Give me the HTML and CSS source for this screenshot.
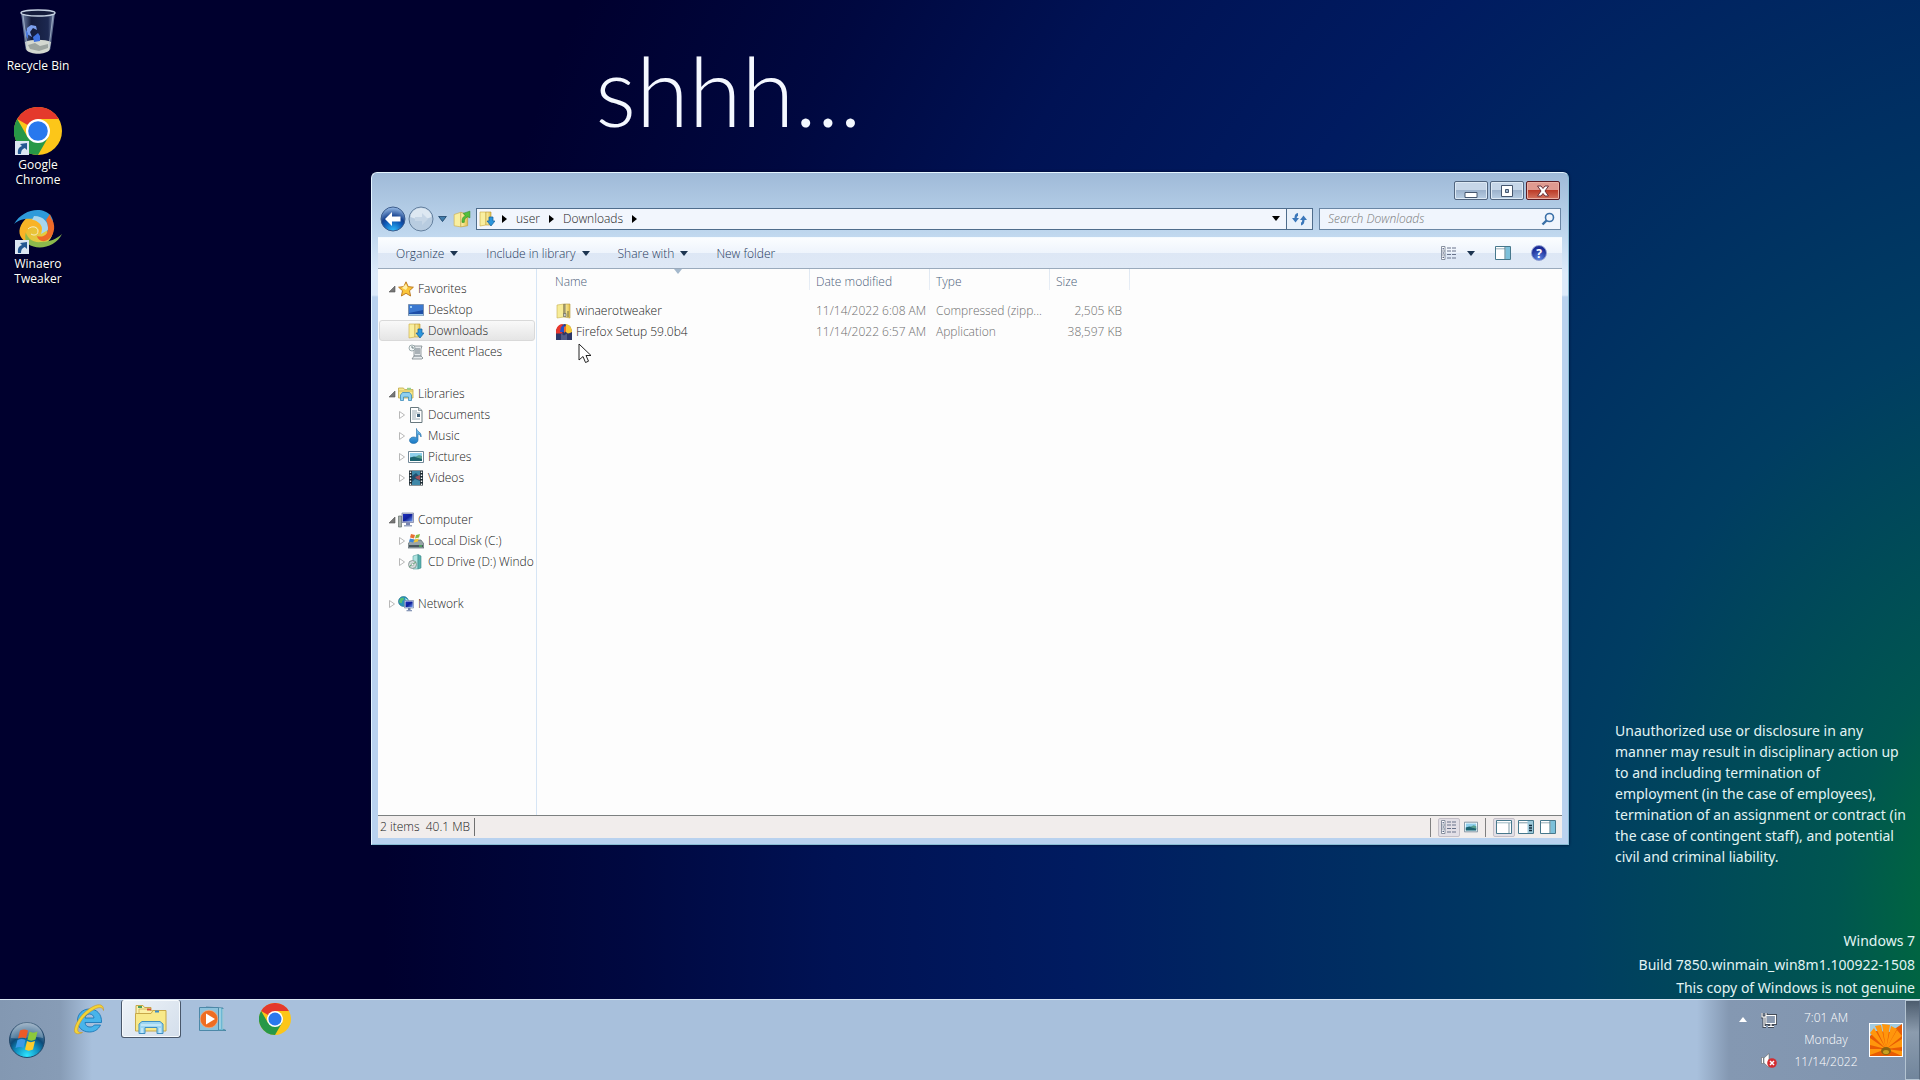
FILE: index.html
```
<!DOCTYPE html>
<html lang="en">
<head>
    <meta charset="UTF-8">
    <meta name="viewport" content="width=device-width, initial-scale=1.0">
    <title>Downloads</title>
    <link rel="stylesheet" href="styles.css">
</head>
<body>
    <!-- shared icons -->
    <svg class="sprite" aria-hidden="true">
        <defs>
            <linearGradient id="gFolder" x1="0" y1="0" x2="1" y2="0">
                <stop offset="0" stop-color="#fdf5b0"/><stop offset="1" stop-color="#e3c04c"/>
            </linearGradient>
            <linearGradient id="gBlue" x1="0" y1="0" x2="0" y2="1">
                <stop offset="0" stop-color="#7fc8f2"/><stop offset="1" stop-color="#1878c4"/>
            </linearGradient>
            <linearGradient id="gScreen" x1="0" y1="0" x2="1" y2="1">
                <stop offset="0" stop-color="#1c2ec0"/><stop offset=".5" stop-color="#10209a"/><stop offset="1" stop-color="#6f9cf0"/>
            </linearGradient>
            <linearGradient id="gGlass" x1="0" y1="0" x2="1" y2="0">
                <stop offset="0" stop-color="#8fa6c8" stop-opacity=".8"/><stop offset=".3" stop-color="#141c3c"/><stop offset=".8" stop-color="#1c2850"/><stop offset="1" stop-color="#9fb2d0" stop-opacity=".8"/>
            </linearGradient>
            <radialGradient id="gOrb" cx=".5" cy=".95" r=".95">
                <stop offset="0" stop-color="#2ee6ff"/><stop offset=".4" stop-color="#0d86b8"/><stop offset=".6" stop-color="#0c4a78"/><stop offset="1" stop-color="#8aa2ba"/>
            </radialGradient>
            <radialGradient id="gBack" cx=".5" cy="1" r="1">
                <stop offset="0" stop-color="#30c0ff"/><stop offset=".45" stop-color="#0d56b4"/><stop offset=".6" stop-color="#14408e"/><stop offset="1" stop-color="#9cc0ea"/>
            </radialGradient>
            <linearGradient id="gSwirl" x1="0" y1="0" x2="1" y2="1">
                <stop offset="0" stop-color="#f8b020"/><stop offset="1" stop-color="#d8d850"/>
            </linearGradient>
        </defs>
        <symbol id="i-down" viewBox="0 0 16 16">
            <path d="M1 1h6v13l-6 1z" fill="#f9efa0" stroke="#c9a83c" stroke-width=".6"/>
            <path d="M7 1h5v13H7z" fill="url(#gFolder)" stroke="#b8962e" stroke-width=".6"/>
            <path d="M10 6h4v4h2l-4 5-4-5h2z" fill="#2b95dc" stroke="#14609c" stroke-width=".7"/>
        </symbol>
        <symbol id="i-up" viewBox="0 0 16 16">
            <path d="M1 4l6-2v13l-6-1z" fill="#f9efa0" stroke="#d0b050" stroke-width=".6"/>
            <path d="M7 2l6 2v10l-6 1z" fill="url(#gFolder)" stroke="#c0a040" stroke-width=".6"/>
            <path d="M8 11c0-4 1-5 3-6L9 3l6-2v6l-2-1c-2 1-3 2-3 5z" fill="#52bf3c" stroke="#2e8a20" stroke-width=".5"/>
        </symbol>
        <symbol id="i-star" viewBox="0 0 16 16">
            <path d="M8 .8l2.200 4.800 5.200.6-3.900 3.500 1.100 5.300L8 12.300 3.400 15l1.100-5.300L.6 6.200l5.200-.6z" fill="#fbc63a" stroke="#b8741c" stroke-width=".9"/>
            <path d="M8 3l1.500 3.500L8 9 4 7z" fill="#fff0a8"/>
        </symbol>
        <symbol id="i-desktop" viewBox="0 0 16 16">
            <path d="M.5 2.500h15v11H.5z" fill="#1d4fa8" stroke="#7890b0"/>
            <path d="M1 3h14v5L1 11z" fill="#3a78d0"/>
            <path d="M1 12h14v1.500H1z" fill="#9cc8e8"/>
            <path d="M2 4h2v2H2z" fill="#9cd0f8"/>
        </symbol>
        <symbol id="i-recent" viewBox="0 0 16 16">
            <path d="M5 2h9l-1 3v7l2 2-1 1H4l2-3V4z" fill="#e6eaec" stroke="#7c868c" stroke-width=".8"/>
            <path d="M7 5h5M7 7h5M7 9h5M6 12h7" stroke="#6c7880" stroke-width="1"/>
            <circle cx="4" cy="4" r="3" fill="#f4f8f8" stroke="#88989c" stroke-width=".8"/>
            <path d="M4 2v2h2" stroke="#506468" stroke-width=".8" fill="none"/>
        </symbol>
        <symbol id="i-lib" viewBox="0 0 16 16">
            <path d="M.5 2h5l1 1.500h8.500V12H.5z" fill="#f6e88c" stroke="#c0a848" stroke-width=".8"/>
            <path d="M1 5h14" stroke="#d8bc58"/><path d="M9 1.800h4v2H9z" fill="#9ad08c"/>
            <path d="M2.500 14.500V9l2-2.500h7l2 2.500v5.500h-3V11h-5v3.500z" fill="#8ed0f0" stroke="#3c8cba" stroke-width=".8"/>
        </symbol>
        <symbol id="i-doc" viewBox="0 0 16 16">
            <path d="M2.500.5h8l3.500 3v12H2.500z" fill="#fff" stroke="#68787e"/>
            <path d="M4 4h5M4 6h8M4 8h4M4 10h4M4 12h8" stroke="#98a8b2"/>
            <path d="M9 7h3v3H9z" fill="#3e5f78"/>
            <path d="M10.500.5v3H14" fill="#c8d4da" stroke="#68787e" stroke-width=".7"/>
        </symbol>
        <symbol id="i-music" viewBox="0 0 16 16">
            <path d="M8.500.5c0 3 5.500 3.500 4.500 8.500-.5-2-1.800-3-3-3v6c0 2-1.900 3.500-4.500 3.500S1.500 14 1.500 12.200 3.500 9 5.500 9c1.300 0 2.200.3 3 .8z" fill="url(#gBlue)" stroke="#1b68a4" stroke-width=".6"/>
        </symbol>
        <symbol id="i-pic" viewBox="0 0 16 16">
            <path d="M.5 2.500h15v11H.5z" fill="#fff" stroke="#728898"/>
            <path d="M2 4h12v8H2z" fill="#8fd0ec"/><path d="M2 8.500l4-1 8 1.500v3H2z" fill="#1c6470"/><path d="M7 8l4-2 3 1v3z" fill="#58a090"/>
        </symbol>
        <symbol id="i-video" viewBox="0 0 16 16">
            <path d="M1 .5h14v15H1z" fill="#1c2a32"/>
            <path d="M4 1h8v14H4z" fill="#3f88a8"/><path d="M4 6l4-3 4 4v4l-5-2-3 3z" fill="#205070"/><path d="M7 7l5-2v5l-3-1z" fill="#a05058"/>
            <path d="M2.500 1.500v14M13.500 1.500v14" stroke="#f0f4f4" stroke-width="1.400" stroke-dasharray="1.500 1.500"/>
        </symbol>
        <symbol id="i-pc" viewBox="0 0 16 16">
            <path d="M.5 4h3v11h-3z" fill="#a8b0ac" stroke="#64706c" stroke-width=".7"/>
            <path d="M4 1h11.500v9.500H4z" fill="#c8ccd8" stroke="#7078a0" stroke-width=".7"/>
            <path d="M5 2h9.500v7.500H5z" fill="url(#gScreen)"/><path d="M8 10.500h4V13H8z" fill="#7884b0"/><path d="M6 13h8v1.500H6z" fill="#98a4c0"/>
        </symbol>
        <symbol id="i-disk" viewBox="0 0 16 16">
            <path d="M3 7h10l3 4v4H0v-4z" fill="#98a4a8" stroke="#58646a" stroke-width=".7"/>
            <path d="M1 12h14v2H1z" fill="#48565c"/><path d="M11 12.500h3v1h-3z" fill="#52e060"/>
            <path d="M3 1l4 1-1 3.500-4-1z" fill="#e87034"/><path d="M8 2l4-1-1 3.500-4 1z" fill="#86b840"/><path d="M2 5.500l4 1-1 3-4-1z" fill="#3c88d8"/><path d="M6.800 6.500l4-1-1 3-4 1z" fill="#f4c430"/>
        </symbol>
        <symbol id="i-cd" viewBox="0 0 16 16">
            <path d="M5 2l5-1.500V15H5z" fill="#aee4e0" stroke="#58a0a0" stroke-width=".6"/><path d="M10 .5L13 2v12l-3 1z" fill="#58b0ae" stroke="#3c8a8a" stroke-width=".6"/>
            <circle cx="4.500" cy="10.500" r="4" fill="#d4dcdc" stroke="#788888" stroke-width=".8"/><circle cx="4.500" cy="10.500" r="1.200" fill="#fff" stroke="#788888" stroke-width=".6"/>
            <path d="M1.500 12.500l2-1.500M5.500 10l2-2" stroke="#48a060"/>
        </symbol>
        <symbol id="i-net" viewBox="0 0 16 16">
            <circle cx="5.500" cy="5.500" r="5" fill="#2a94b8" stroke="#186888" stroke-width=".6"/>
            <path d="M2 3c2-2 4-1 4 0s-2 1-2 3-2 1-3 0z" fill="#58c070"/><path d="M7 2l3 2v2L8 5z" fill="#c0ecf0"/>
            <path d="M6.500 4.500h9v7.500h-9z" fill="#dce4f0" stroke="#6878a0" stroke-width=".6"/>
            <path d="M7.500 5.500h7.200v5.700H7.500z" fill="url(#gScreen)"/><path d="M10 12h2.500v2H10z" fill="#7080a8"/><path d="M8.500 14h5.500v1.300H8.500z" fill="#8898b8"/>
        </symbol>
        <symbol id="i-zip" viewBox="0 0 16 16">
            <path d="M1 2l7-1v13l-7 1z" fill="#f7ec98" stroke="#c8b050" stroke-width=".6"/><path d="M8 1h6v14l-6-1z" fill="url(#gFolder)" stroke="#b49840" stroke-width=".6"/>
            <path d="M8.500 1.500v9" stroke="#585850" stroke-width="2.400" stroke-dasharray="1 1"/>
            <path d="M7.500 10.500h2.500v3H7.500z" fill="#c8ccc8" stroke="#606058" stroke-width=".6"/><path d="M12 8v6" stroke="#707048"/>
        </symbol>
        <symbol id="i-ffsetup" viewBox="0 0 16 16">
            <path d="M0 6l4-5 5-1 5 2 2 5v9H0z" fill="#2a3566"/>
            <path d="M0 8C0 3 3 0 7 0L5 6l2 4H0z" fill="#e8362c"/><path d="M10 0c3 .5 6 3 6 8l-4 2-3-3z" fill="#f6c838"/>
            <path d="M5 3l3-2 2 3-2 4-4 0z" fill="#2450c8"/><path d="M8 3l2-1v5L8 9z" fill="#f06a28"/>
            <path d="M0 9.500h16V16H0z" fill="#2e3868"/><path d="M5 9.500l3 2 3-2V16H5z" fill="#525c88"/>
        </symbol>
        <symbol id="i-views" viewBox="0 0 16 14">
            <path d="M.5.5h3.500v13H.5zM.5 5h3.500M.5 9h3.500" fill="#fff" stroke="#7c8696" stroke-width=".9"/>
            <path d="M1.500 2.800h1.500M1.500 7h1.500M1.500 11.300h1.500" stroke="#30406a"/>
            <path d="M6 2h10M6 5h10M6 8.500h10M6 12h10" stroke="#68728a" stroke-dasharray="4 1"/>
        </symbol>
        <symbol id="i-pane" viewBox="0 0 16 14">
            <path d="M.5.5h15v13H.5z" fill="#fff" stroke="#47788c"/><path d="M1 2.800h9" stroke="#7c98a4" stroke-width=".8"/>
            <path d="M10.500 1H15v12h-4.500z" fill="#7cc0da"/><path d="M10 1v12" stroke="#47788c"/>
        </symbol>
        <symbol id="i-pane-empty" viewBox="0 0 16 14">
            <path d="M.5.5h15v13H.5z" fill="#fff" stroke="#47788c"/><path d="M1 2.800h14" stroke="#9cb8c2"/><path d="M13 3v10" stroke="#7c98a4"/>
        </symbol>
        <symbol id="i-pane-list" viewBox="0 0 16 14">
            <path d="M.5.5h15v13H.5z" fill="#fff" stroke="#47788c"/><path d="M1 2.800h9" stroke="#7c98a4"/>
            <path d="M9.500 1H15v12H9.500z" fill="#9cc8da"/><path d="M11 5.500h3M11 8h3M11 10.500h3" stroke="#102838" stroke-width="1.500"/>
        </symbol>
        <symbol id="i-caret" viewBox="0 0 8 5"><path d="M0 0h8L4 5z"/></symbol>
        <symbol id="i-arrow" viewBox="0 0 5 8"><path d="M0 0l5 4-5 4z"/></symbol>
        <symbol id="i-open" viewBox="0 0 8 8"><path d="M7 1v6H1z" fill="#777" stroke="#555" stroke-width=".6"/></symbol>
        <symbol id="i-closed" viewBox="0 0 8 8"><path d="M1.500.5l5 3.500-5 3.500z" fill="#fff" stroke="#b0b0b0" stroke-width=".9"/></symbol>
        <symbol id="i-chrome" viewBox="0 0 48 48">
            <circle cx="24" cy="24" r="24" fill="#fcc619"/>
            <path d="M24 24L3.200 12A24 24 0 0 1 44.800 12H24z" fill="#e4392c"/>
            <path d="M3.200 12A24 24 0 0 0 24 48L34.400 30 24 24 13.600 30z" fill="#279847"/>
            <circle cx="24" cy="24" r="12" fill="#fff"/><circle cx="24" cy="24" r="9.800" fill="#2878ee"/>
        </symbol>
        <symbol id="i-shortcut" viewBox="0 0 14 14">
            <path d="M0 0h14v14H0z" fill="#dce6f2"/>
            <path d="M3 13C2.500 8 4 6 7 5L5 3l7-1v7L9.800 7C7 8 6 10 6 13z" fill="#245892"/>
        </symbol>
        <symbol id="i-bin" viewBox="0 0 36 46">
            <path d="M1 3l4.500 37c4 5 21 5 25 0L35 3z" fill="url(#gGlass)"/>
            <ellipse cx="18" cy="4" rx="17" ry="3" fill="#141c3c" stroke="#c8d4e4" stroke-width="1.400"/>
            <path d="M5 33c6-3 20-3 26 0l-1.500 8c-4 5-19 5-23 0z" fill="#d4d8d0"/><path d="M8 36l7-2 5 3 8-2v4l-9 3-9-2z" fill="#9ca4a0"/>
            <path d="M7 19l4-3 5 1 1 4-4-2-3 4 2 5-5-3z" fill="#7ca0ee"/><path d="M13 28l5-4 2 3 0 5-6 1z" fill="#3f72e0"/><path d="M5 20l3 4v6l-2-3z" fill="#4a78dc"/>
            <path d="M3 6l4 32M33 6l-4 32" stroke="#b8c6d8" stroke-opacity=".7" fill="none"/>
        </symbol>
        <symbol id="i-winaero" viewBox="0 0 48 40">
            <circle cx="23" cy="20" r="16" fill="url(#gSwirl)"/>
            <path d="M0 14C8 0 28-5 37 6c4 6 2 14-4 16 2-8-4-13-12-13C12 8 5 9 0 14z" fill="#2e9ada"/>
            <path d="M20 6c10 0 15 7 14 14l-7 4c3-8-1-12-9-14z" fill="#a8d6ee"/>
            <path d="M36 4l1 4c5 6 4 16-2 21-5 4-11 2-12-3 6 2 11-1 11-8 0-5-2-8-2-8z" fill="#ee6a28"/>
            <path d="M48 24C42 37 24 41 14 34c-5-4-6-10-3-15 1 9 8 14 16 13 8 0 16-3 21-8z" fill="#8cba4c"/>
            <path d="M9 12c-6 8-4 16 3 20-2-8 0-15 8-16 6 0 6 6 2 7 4 1 7-3 5-7-3-7-13-8-18-4z" fill="#f9b326"/>
            <path d="M14 19c4-4 10-2 10 2s-4 5-7 3" fill="none" stroke="#fff" stroke-opacity=".7"/>
        </symbol>
        <symbol id="i-ie" viewBox="0 0 32 32">
            <path d="M27.500 22C25 27 21 29 16.500 29 9 29 4.500 24 4.500 17.500S9.500 6 16.500 6c7 0 12.500 5 12 13.500H12c.3 3 2 4.500 5 4.500 2.200 0 3.500-.8 4.300-2zM12 15h9c-.3-2.500-2-4-4.500-4S12.500 12.500 12 15z" fill="#48b4ea" stroke="#1c78b8" stroke-width=".9" fill-rule="evenodd"/>
            <path d="M30.500 7.500C31 2 27 0 20 3.500 11 8 3 18 1.500 26c-.8 5 3 6 8 3.500-4 .5-5.500-1-4.500-4.500C7 17 14 10 22 6c4-2 7.500-2.200 8.500 1.500z" fill="#f4d436" stroke="#c8962a" stroke-width=".6"/>
        </symbol>
        <symbol id="i-explorer" viewBox="0 0 34 30">
            <path d="M2 1.500h7l1.500 2H17V26H2z" fill="#fbf2ae" stroke="#c8a848"/>
            <path d="M9 5h6l2 1.500h6V26H5V5z" fill="#fbf0a4" stroke="#ceae50" stroke-width=".8"/>
            <path d="M1.500 9.500H17l2-3h13V27h-30.500z" fill="#f8e98a" stroke="#c8a848"/>
            <path d="M4 2h4v2H4z" fill="#4ca060"/><path d="M13 4.500h4v2h-4z" fill="#d85038"/><path d="M21 6.500h4v2h-4z" fill="#3c8cc8"/>
            <path d="M5 29.500V20l3-2.500h18l3 2.500v9.500h-6v-6H11v6z" fill="#9cd6f2" stroke="#3f8fc2"/>
            <path d="M7 21h20M8 24v5M26 24v5" stroke="#e4f6ff"/>
        </symbol>
        <symbol id="i-media" viewBox="0 0 30 26">
            <path d="M8 1l17 1v21l3 1.500H9z" fill="#6cb8d4" stroke="#40809c" stroke-width=".8"/>
            <path d="M22 2v21M25 3v20" stroke="#e0f2f8" stroke-width=".8"/>
            <path d="M1.500 1.500h19v23h-19z" fill="#8cc2dc" stroke="#4c88a8"/>
            <circle cx="11" cy="13" r="8.800" fill="#ee6d22" stroke="#f8b488" stroke-width=".6"/><path d="M8 7.500v11l9-5.500z" fill="#fff"/>
        </symbol>
        <symbol id="i-start" viewBox="0 0 38 38">
            <circle cx="19" cy="19" r="17.500" fill="url(#gOrb)" stroke="#24486a"/>
            <path d="M3 17a16 16 0 0 1 32 0c-10-3-22 2-32 0z" fill="#fff" fill-opacity=".25"/>
            <path d="M12 9.500c3-1.500 5.500-1.500 8 0l-2 8c-2.500-1.500-5-1.500-8 0z" fill="#ee5a26"/>
            <path d="M21.500 10.500c2.500 1.500 5 1.500 8 0l-2 8c-3 1.500-5.500 1.500-8 0z" fill="#8cc83c"/>
            <path d="M9.500 19c3-1.500 5.500-1.500 8 0l-2 8c-2.500-1.500-5-1.500-8 0z" fill="#3c9ae8"/>
            <path d="M19 20c2.500 1.500 5 1.500 8 0l-2 8.500c-3 1.500-5.500 1.500-8 0z" fill="#fccc2c"/>
        </symbol>
    </svg>

    <main class="desktop">
        <div class="shortcuts">
            <a class="shortcut" href="#">
                <span class="shortcut-icon"><svg width="36" height="46"><use href="#i-bin"/></svg></span>
                Recycle Bin
            </a>
            <a class="shortcut" href="#">
                <span class="shortcut-icon"><svg width="48" height="48"><use href="#i-chrome"/></svg><svg class="overlay" width="14" height="14"><use href="#i-shortcut"/></svg></span>
                Google Chrome
            </a>
            <a class="shortcut" href="#">
                <span class="shortcut-icon"><svg width="48" height="40"><use href="#i-winaero"/></svg><svg class="overlay" width="14" height="14"><use href="#i-shortcut"/></svg></span>
                Winaero Tweaker
            </a>
        </div>

        <h1 class="shhh">shhh...</h1>

        <div class="watermark">
            <p class="legal">
                Unauthorized use or disclosure in any<br>
                manner may result in disciplinary action up<br>
                to and including termination of<br>
                employment (in the case of employees),<br>
                termination of an assignment or contract (in<br>
                the case of contingent staff), and potential<br>
                civil and criminal liability.
            </p>
            <p class="build">Windows 7</p>
            <p class="build">Build 7850.winmain_win8m1.100922-1508</p>
            <p class="build genuine">This copy of Windows is not genuine</p>
        </div>

        <section class="window" aria-label="Downloads">
            <div class="titlebar">
                <button class="winbtn" aria-label="Minimize"><svg width="14" height="14"><path d="M1 8.500h12v5H1z" fill="#fff" stroke="#45566e"/></svg></button>
                <button class="winbtn" aria-label="Maximize"><svg width="14" height="14"><path d="M1.500 1.500h11v11h-11zM5.500 5.500h3v3h-3z" fill="#fff" fill-rule="evenodd" stroke="#45566e"/></svg></button>
                <button class="winbtn close" aria-label="Close"><svg width="14" height="14"><path d="M1.500 2h3.500l2 2.500L9 2h3.500L9 7l3.500 5H9L7 9.500 5 12H1.500L5 7z" fill="#fff" stroke="#6a3038"/></svg></button>
            </div>

            <div class="navrow">
                <button class="round" aria-label="Back"><svg width="26" height="26"><circle cx="13" cy="13" r="12" fill="url(#gBack)" stroke="#3c5c8c"/><path d="M5 13l7-7v4.500h8.500v5H12V20z" fill="#fff"/></svg></button>
                <button class="round" aria-label="Forward"><svg width="26" height="26"><circle cx="13" cy="13" r="12" fill="#b8cce0" stroke="#64809e"/><path d="M2.500 11a10.500 9 0 0 1 21 0c-7 3-14 3-21 0z" fill="#dde8f2"/><path d="M20 13l-6-6v4H7v4h7v4z" fill="#c6d6e6"/></svg></button>
                <button class="recent" aria-label="Recent pages"><svg width="9" height="6" viewBox="0 0 10 7"><path d="M.5.5h9L5 6.500z" fill="#3f7cac" stroke="#1d4468"/></svg></button>
                <button class="up" aria-label="Up"><svg width="18" height="18"><use href="#i-up"/></svg></button>
                <nav class="address" aria-label="Address">
                    <svg width="16" height="16"><use href="#i-down"/></svg>
                    <svg class="sep" width="5" height="8"><use href="#i-arrow"/></svg>
                    <a href="#">user</a>
                    <svg class="sep" width="5" height="8"><use href="#i-arrow"/></svg>
                    <a href="#">Downloads</a>
                    <svg class="sep" width="5" height="8"><use href="#i-arrow"/></svg>
                    <button class="history" aria-label="Previous locations"><svg width="8" height="5"><use href="#i-caret"/></svg></button>
                </nav>
                <button class="refresh" aria-label="Refresh"><svg width="15" height="14"><path d="M0 6h2.500c0-3 1-4.500 3.500-5v3c-1 .3-1.200 1-1.200 2H7l-3.500 4.500zM15 8h-2.500c0 3-1 5-3.500 5.500v-3c1-.3 1.200-1 1.200-2.500H8l3.500-4.500z" fill="#3c78ba"/></svg></button>
                <form class="search">
                    <input type="search" placeholder="Search Downloads" aria-label="Search Downloads">
                    <button type="button" aria-label="Search"><svg width="14" height="14"><circle cx="8.500" cy="5.500" r="4" fill="none" stroke="#3a70a8" stroke-width="1.600"/><path d="M5.500 8.500L1.500 12.500" stroke="#3a70a8" stroke-width="2.400"/></svg></button>
                </form>
            </div>

            <div class="toolbar">
                <button>Organize <svg width="8" height="5"><use href="#i-caret"/></svg></button>
                <button>Include in library <svg width="8" height="5"><use href="#i-caret"/></svg></button>
                <button>Share with <svg width="8" height="5"><use href="#i-caret"/></svg></button>
                <button>New folder</button>
                <div class="tools">
                    <button aria-label="Change view"><svg width="16" height="14"><use href="#i-views"/></svg></button>
                    <button aria-label="More views"><svg width="8" height="5"><use href="#i-caret"/></svg></button>
                    <button aria-label="Preview pane"><svg width="16" height="14"><use href="#i-pane"/></svg></button>
                    <button class="help" aria-label="Help">?</button>
                </div>
            </div>

            <div class="content">
                <nav class="tree" aria-label="Folders">
                    <ul>
                        <li><a href="#"><svg class="tw" width="8" height="8"><use href="#i-open"/></svg><svg width="16" height="16"><use href="#i-star"/></svg>Favorites</a></li>
                        <li><a class="sub" href="#"><svg width="16" height="16"><use href="#i-desktop"/></svg>Desktop</a></li>
                        <li><a class="sub selected" href="#"><svg width="16" height="16"><use href="#i-down"/></svg>Downloads</a></li>
                        <li><a class="sub" href="#"><svg width="16" height="16"><use href="#i-recent"/></svg>Recent Places</a></li>
                    </ul>
                    <ul>
                        <li><a href="#"><svg class="tw" width="8" height="8"><use href="#i-open"/></svg><svg width="16" height="16"><use href="#i-lib"/></svg>Libraries</a></li>
                        <li><a class="node" href="#"><svg class="tw" width="8" height="8"><use href="#i-closed"/></svg><svg width="16" height="16"><use href="#i-doc"/></svg>Documents</a></li>
                        <li><a class="node" href="#"><svg class="tw" width="8" height="8"><use href="#i-closed"/></svg><svg width="16" height="16"><use href="#i-music"/></svg>Music</a></li>
                        <li><a class="node" href="#"><svg class="tw" width="8" height="8"><use href="#i-closed"/></svg><svg width="16" height="16"><use href="#i-pic"/></svg>Pictures</a></li>
                        <li><a class="node" href="#"><svg class="tw" width="8" height="8"><use href="#i-closed"/></svg><svg width="16" height="16"><use href="#i-video"/></svg>Videos</a></li>
                    </ul>
                    <ul>
                        <li><a href="#"><svg class="tw" width="8" height="8"><use href="#i-open"/></svg><svg width="16" height="16"><use href="#i-pc"/></svg>Computer</a></li>
                        <li><a class="node" href="#"><svg class="tw" width="8" height="8"><use href="#i-closed"/></svg><svg width="16" height="16"><use href="#i-disk"/></svg>Local Disk (C:)</a></li>
                        <li><a class="node" href="#"><svg class="tw" width="8" height="8"><use href="#i-closed"/></svg><svg width="16" height="16"><use href="#i-cd"/></svg>CD Drive (D:) Windo</a></li>
                    </ul>
                    <ul>
                        <li><a href="#"><svg class="tw" width="8" height="8"><use href="#i-closed"/></svg><svg width="16" height="16"><use href="#i-net"/></svg>Network</a></li>
                    </ul>
                </nav>
                <div class="files">
                    <table>
                        <colgroup><col class="c-name"><col class="c-date"><col class="c-type"><col class="c-size"></colgroup>
                        <thead>
                            <tr><th class="sorted">Name<svg width="8" height="5"><use href="#i-caret"/></svg></th><th>Date modified</th><th>Type</th><th>Size</th></tr>
                        </thead>
                        <tbody>
                            <tr><td><span class="file"><svg width="16" height="16"><use href="#i-zip"/></svg>winaerotweaker</span></td><td>11/14/2022 6:08 AM</td><td>Compressed (zipp...</td><td>2,505 KB</td></tr>
                            <tr><td><span class="file"><svg width="16" height="16"><use href="#i-ffsetup"/></svg>Firefox Setup 59.0b4</span></td><td>11/14/2022 6:57 AM</td><td>Application</td><td>38,597 KB</td></tr>
                        </tbody>
                    </table>
                </div>
            </div>

            <div class="statusbar">
                <span class="count">2 items&nbsp; 40.1 MB</span>
                <div class="viewgroup">
                    <button class="on" aria-label="Details"><svg width="16" height="14"><use href="#i-views"/></svg></button>
                    <button aria-label="Thumbnails"><svg width="14" height="14"><use href="#i-pic"/></svg></button>
                </div>
                <div class="viewgroup">
                    <button class="on" aria-label="No pane"><svg width="16" height="14"><use href="#i-pane-empty"/></svg></button>
                    <button aria-label="Details pane"><svg width="16" height="14"><use href="#i-pane-list"/></svg></button>
                    <button aria-label="Preview pane"><svg width="16" height="14"><use href="#i-pane"/></svg></button>
                </div>
            </div>
        </section>

        <svg class="cursor" width="14" height="21" viewBox="0 0 14 21"><path d="M1 1v16l4-3.500 2.500 6 3-1.300L8 12.500h5z" fill="#fff" stroke="#222"/></svg>
    </main>

    <footer class="taskbar">
        <button class="start" aria-label="Start"><svg width="38" height="38"><use href="#i-start"/></svg></button>
        <div class="tasks">
            <button aria-label="Internet Explorer"><svg width="32" height="32"><use href="#i-ie"/></svg></button>
            <button class="active" aria-label="Windows Explorer"><svg width="34" height="30"><use href="#i-explorer"/></svg></button>
            <button aria-label="Windows Media Player"><svg width="30" height="26"><use href="#i-media"/></svg></button>
            <button aria-label="Google Chrome"><svg width="32" height="32"><use href="#i-chrome"/></svg></button>
        </div>
        <div class="tray">
            <button class="more" aria-label="Show hidden icons"><svg width="8" height="5"><path d="M0 5h8L4 0z" fill="#fff"/></svg></button>
            <div class="status">
                <button aria-label="Network"><svg width="16" height="16"><path d="M5 3.500h9.500v8H5zM7 14.500h6M10 12v2M1 1v4h4V1M3 5v9.500h2" fill="none" stroke="#444c58" stroke-width="3"/><path d="M5.500 4h9v7.500h-9z" fill="#8a9ab0"/><path d="M5 3.500h9.500v8H5zM7 14.500h6M10 12v2M1 1v4h4V1M3 5v9.500h2" fill="none" stroke="#fff" stroke-width="1.200"/></svg></button>
                <button aria-label="Volume muted"><svg width="16" height="16"><path d="M.5 4.500h2v6h-2zM3 5l5-4.500v14L3 10z" fill="#fff" stroke="#555" stroke-width=".5"/><circle cx="11" cy="10" r="4.800" fill="#d42c30"/><path d="M9 8l4 4M13 8l-4 4" stroke="#fff" stroke-width="1.500"/></svg></button>
            </div>
            <div class="clock"><span>7:01 AM</span><span>Monday</span><span>11/14/2022</span></div>
            <button class="user" aria-label="User account">
                <svg width="32" height="32" viewBox="0 0 32 32">
                    <path d="M0 0h32v32H0z" fill="#e85c04"/><path d="M0 0h32L20 8 6 7 0 12z" fill="#a4cce0"/>
                    <path d="M16 25L5 2l6-1zM16 25L12 0l8 1zM16 25l5-23 6 3zM16 25L27 6l5 6zM16 25l16-10v8zM16 25L0 9l4-5zM16 25L0 14v7zM16 25L0 25v6zM16 25l16 2v5z" fill="#ff960c"/>
                    <ellipse cx="16" cy="27" rx="5" ry="4" fill="#8c6410"/><ellipse cx="16" cy="28" rx="3" ry="2" fill="#c8a020"/>
                </svg>
            </button>
            <button class="peek" aria-label="Show desktop"></button>
        </div>
    </footer>
</body>
</html>
```
FILE: styles.css
```
* {
    box-sizing: border-box;
}

body {
    margin: 0;
    height: 100vh;
    display: flex;
    flex-direction: column;
    overflow: hidden;
    font-family: "Open Sans", "Noto Sans", sans-serif;
    font-size: 12px;
    color: #222;
    background: radial-gradient(90% 185% at 110% 86%, #007434 6%, #00683e 10%, #005650 16%, #003d62 31%, #003062 42%, #001b60 60%, #001254 74%, #000840 86%, #00002e 100%);
}

button {
    display: flex;
    align-items: center;
    justify-content: center;
    padding: 0;
    border: none;
    background: none;
    font: inherit;
    color: inherit;
}

a {
    color: inherit;
    text-decoration: none;
}

svg {
    flex: none;
    display: block;
}

.sprite {
    position: absolute;
    width: 0;
    height: 0;
}

.desktop {
    position: relative;
    flex: 1;
}

/* desktop icons */
.shortcuts {
    display: flex;
    flex-direction: column;
    width: 76px;
    padding-top: 6px;
}

.shortcut {
    display: flex;
    flex-direction: column;
    align-items: center;
    min-height: 99px;
    padding: 0 12px;
    line-height: 15px;
    text-align: center;
    color: #fff;
    text-shadow: 0 1px 2px #000;
}

.shortcut:first-child {
    padding: 0;
}

.shortcut-icon {
    position: relative;
    display: flex;
    align-items: center;
    justify-content: center;
    width: 48px;
    height: 52px;
}

.overlay {
    position: absolute;
    left: 1px;
    bottom: 2px;
}

.shhh {
    position: absolute;
    left: 31%;
    top: 18px;
    margin: 0;
    font-family: Lato, "Open Sans", sans-serif;
    font-size: 96px;
    line-height: 144px;
    font-weight: 300;
    color: #f4f8ff;
}

.watermark {
    position: absolute;
    right: 5px;
    bottom: 0;
    width: 300px;
    font-family: "Noto Sans", sans-serif;
    font-size: 14px;
    line-height: 21px;
    white-space: nowrap;
    color: #e2f4f4;
}

.watermark p {
    margin: 0;
}

.watermark .legal {
    margin-bottom: 62px;
}

.watermark .build {
    text-align: right;
    line-height: 24px;
}

.watermark .genuine {
    line-height: 22px;
}

/* explorer window */
.window {
    position: absolute;
    left: 371px;
    right: 351px;
    top: 172px;
    bottom: 154px;
    display: flex;
    flex-direction: column;
    padding: 0 6px 6px;
    border: 1px solid #e4f4ff;
    border-right-color: #88bcd4;
    border-bottom-color: #88bcd4;
    border-radius: 6px 6px 0 0;
    background: linear-gradient(#9fbad8, #bfd7ee 60px, #dceafa 100px, #dceafa 122px, #b9d2ef 124px);
    box-shadow: 0 0 3px #000c2c;
    font-weight: 300;
}

.titlebar {
    display: flex;
    justify-content: flex-end;
    gap: 2px;
    height: 30px;
    padding: 8px 2px 0 0;
}

.winbtn {
    width: 34px;
    height: 19px;
    border: 1px solid #51657f;
    border-radius: 2px;
    background: linear-gradient(#c6d6e8 50%, #9cb2cc 50%, #b8cee4);
    box-shadow: inset 0 0 0 1px #dde9f4;
}

.winbtn.close {
    border-color: #5b1c24;
    background: linear-gradient(#e09a90 50%, #bc3c28 50%, #d47460);
    box-shadow: inset 0 0 0 1px #eab0a4;
}

.navrow {
    display: flex;
    align-items: center;
    height: 34px;
    padding: 0 1px 3px 2px;
}

.round {
    width: 26px;
    margin-right: 2px;
}

.recent {
    width: 12px;
}

.up {
    width: 28px;
}

.address {
    display: flex;
    flex: 1;
    align-items: center;
    height: 22px;
    padding-left: 2px;
    border: 1px solid #4f6d8c;
    background: #f2f6fd;
}

.address a {
    padding: 0 2px;
}

.address .sep {
    margin: 0 7px;
}

.history {
    width: 20px;
    height: 20px;
    margin-left: auto;
}

.refresh {
    width: 26px;
    height: 22px;
    border: 1px solid #4f6d8c;
    border-left: none;
    background: #e9f1fa;
}

.search {
    display: flex;
    width: 242px;
    height: 22px;
    margin-left: 6px;
    border: 1px solid #6a86a4;
    background: #f0f5fd;
}

.search input {
    flex: 1;
    min-width: 0;
    padding: 0 8px;
    border: none;
    background: none;
    font: inherit;
    font-style: italic;
}

.search input::placeholder {
    color: #777;
}

.search button {
    width: 24px;
}

.toolbar {
    display: flex;
    gap: 28px;
    height: 32px;
    padding: 0 15px 0 18px;
    border-top: 1px solid #f4faff;
    border-bottom: 1px solid #9aaabc;
    background: linear-gradient(#fbfdff, #eef4fc 50%, #dde7f5 50%, #dfe9f6);
    color: #1e395b;
}

.toolbar button {
    gap: 6px;
}

.toolbar svg {
    fill: #1c3450;
}

.tools {
    display: flex;
    align-items: center;
    margin-left: auto;
    gap: 20px;
}

.tools button:nth-child(2) {
    margin-left: -10px;
}

.tools .help {
    width: 16px;
    height: 16px;
    border: 1px solid #8a9ad0;
    border-radius: 50%;
    background: radial-gradient(circle at 50% 90%, #5a84e0, #1c2c96 70%);
    color: #fff;
    font-weight: 700;
}

.content {
    display: flex;
    flex: 1;
    min-height: 0;
    background: #fdfdfd;
}

/* folder tree */
.tree {
    width: 159px;
    padding: 9px 0 0 1px;
    border-right: 1px solid #d6e5f5;
}

.tree ul {
    margin: 0 0 21px;
    padding: 0;
    list-style: none;
}

.tree a {
    display: flex;
    align-items: center;
    gap: 4px;
    height: 21px;
    margin-right: 1px;
    padding-left: 8px;
    border: 1px solid transparent;
    white-space: nowrap;
}

.tree .tw {
    margin-right: -2px;
}

.tree .sub {
    padding-left: 28px;
}

.tree .node {
    padding-left: 18px;
}

.tree .selected {
    border-color: #d9d9d9;
    border-radius: 3px;
    background: linear-gradient(#f9f9f9, #e5e5e5);
}

/* file list */
.files {
    flex: 1;
}

.files table {
    table-layout: fixed;
    width: 593px;
    border-collapse: collapse;
}

.c-name {
    width: 273px;
}

.c-date,
.c-type {
    width: 120px;
}

.c-size {
    width: 80px;
}

.files th {
    position: relative;
    height: 31px;
    padding: 0 0 6px 6px;
    font-weight: 300;
    text-align: left;
    color: #4c607a;
    background: linear-gradient(#dfe8f2, #e8eef6) right top / 1px 21px no-repeat;
}

.files th:first-child {
    padding-left: 18px;
}

.sorted svg {
    position: absolute;
    left: 50%;
    top: 0;
    fill: #a4b8cc;
}

.files td {
    height: 21px;
    padding: 0 0 0 6px;
    white-space: nowrap;
    color: #6d6d6d;
}

.files td:first-child {
    padding-left: 19px;
    color: #222;
}

.files td:last-child {
    padding-right: 8px;
    text-align: right;
}

.file {
    display: flex;
    align-items: center;
    gap: 4px;
}

.statusbar {
    display: flex;
    align-items: center;
    height: 23px;
    border-top: 1px solid #7c8080;
    background: #f1edec;
}

.count {
    margin-right: auto;
    padding: 0 4px 0 2px;
    border-right: 1px solid #707070;
    line-height: 18px;
}

.viewgroup {
    display: flex;
    padding: 0 3px 0 7px;
    border-left: 1px solid #808080;
}

.viewgroup button {
    width: 22px;
    height: 19px;
}

.viewgroup .on {
    border: 1px solid #c4c0c8;
    border-radius: 2px;
    background: #e2dfe6;
}

.cursor {
    position: absolute;
    left: 578px;
    top: 343px;
}

/* taskbar */
.taskbar {
    display: flex;
    height: 81px;
    border-top: 1px solid #d9e6f2;
    background: linear-gradient(90deg, #8398b2, #879cb6 60px, #a8c0dc 92px);
}

.start {
    width: 54px;
}

.tasks {
    display: flex;
    flex: 1;
    gap: 2px;
    padding-left: 5px;
}

.tasks button {
    width: 60px;
    height: 38px;
}

.tasks .active {
    border: 1px solid #49576a;
    border-top: none;
    border-radius: 3px;
    background: linear-gradient(135deg, #eef3f8, #d3deeb);
    box-shadow: inset 0 0 0 1px #f6fafd;
}

.tray {
    display: flex;
    align-items: center;
    padding-left: 42px;
    background: linear-gradient(90deg, #a8c0dc, #8498b2 32px, #8094ae);
    color: #fff;
}

.more {
    width: 8px;
    margin-bottom: 41px;
}

.status {
    display: flex;
    flex-direction: column;
    gap: 25px;
    margin: 0 15px 0 14px;
}

.clock {
    display: flex;
    flex-direction: column;
    width: 68px;
    line-height: 22px;
    text-align: center;
    font-weight: 300;
}

.user {
    width: 34px;
    height: 34px;
    margin: 0 2px 0 9px;
    border: 1px solid #fff;
}

.peek {
    width: 15px;
    height: 100%;
    border: 1px solid #b4c4d2;
    border-right-color: #5a6c80;
    background: linear-gradient(#4c5c6e, #8c9cae 40%, #71859c);
}
```
